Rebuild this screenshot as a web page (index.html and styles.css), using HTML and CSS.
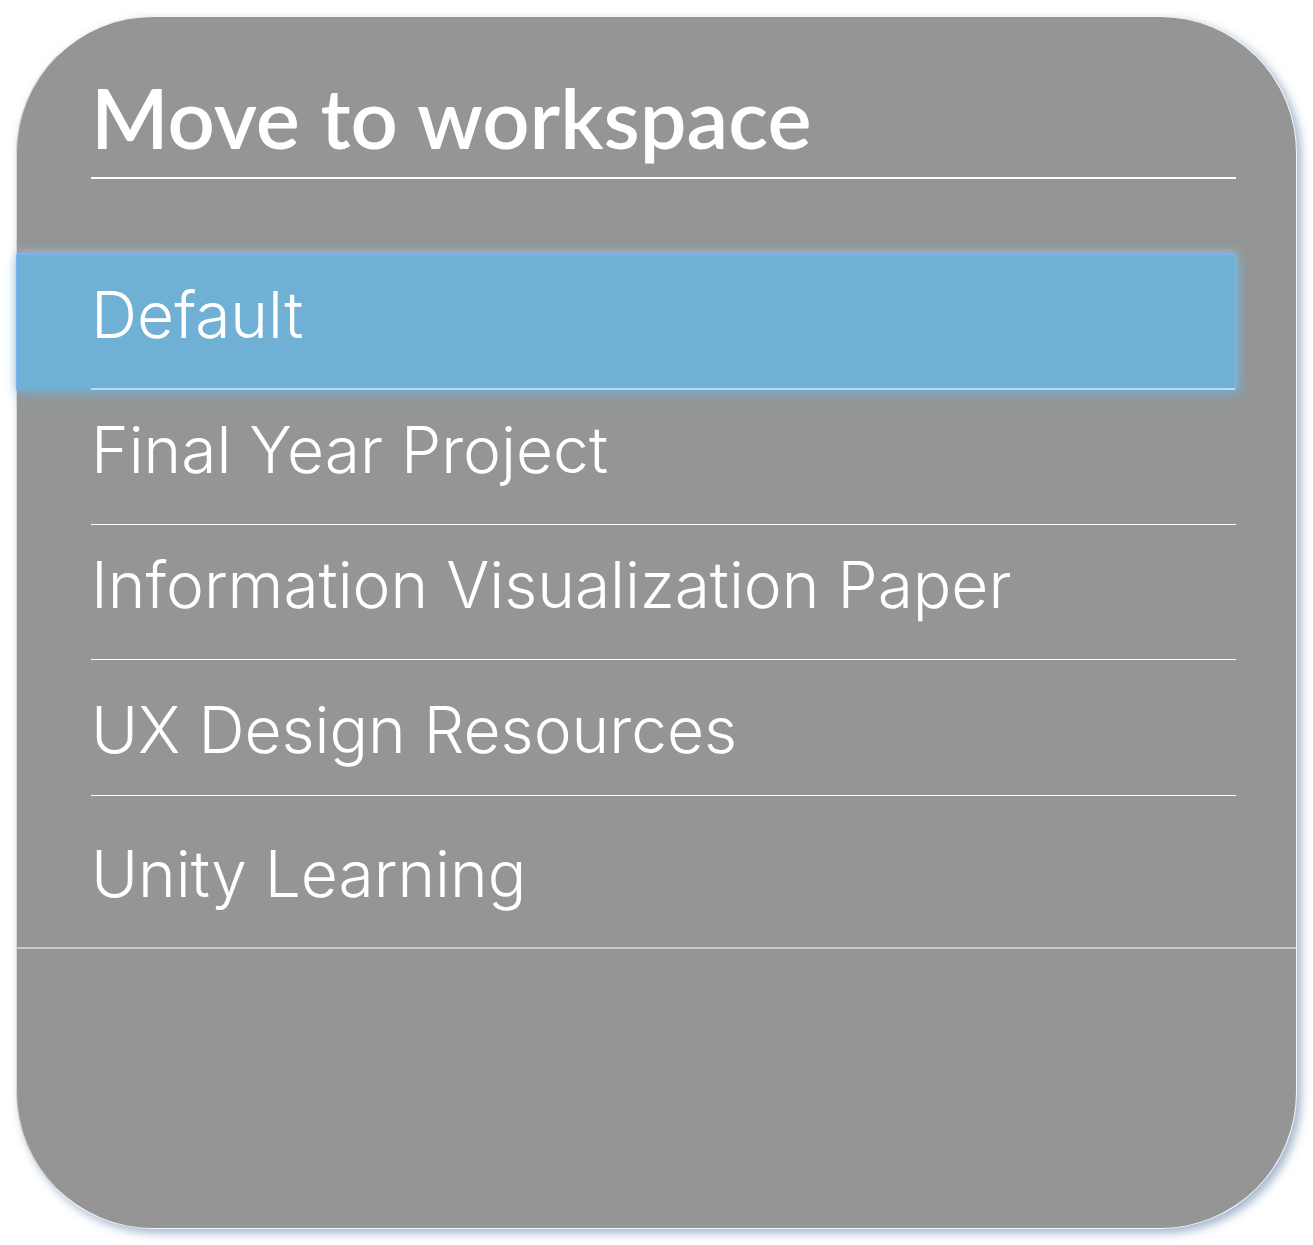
FILE: index.html
```html
<!DOCTYPE html>
<html lang="en">
<head>
<meta charset="utf-8">
<meta name="viewport" content="width=device-width, initial-scale=1">
<title>Move to workspace</title>
<link rel="stylesheet" href="styles.css">
</head>
<body>
<main class="panel">
  <h1 class="title">Move to workspace</h1>
  <nav class="list" aria-label="Workspaces">
    <button type="button" class="item selected"><span class="label">Default</span></button>
    <button type="button" class="item"><span class="label">Final Year Project</span></button>
    <button type="button" class="item"><span class="label">Information Visualization Paper</span></button>
    <button type="button" class="item low"><span class="label">UX Design Resources</span></button>
    <button type="button" class="item last"><span class="label">Unity Learning</span></button>
  </nav>
</main>
</body>
</html>
```
FILE: styles.css
```css
* { box-sizing: border-box; }
body { margin: 0; padding: 16px; background: #fff; }
.panel {
  min-height: calc(100vh - 32px);
  border: 1px solid #f4f5f7;
  border-left-color: #d4d6d8;
  border-radius: 137px;
  background: #959595;
  box-shadow: 4px 4px 10px rgba(70, 105, 155, .5);
  color: #fff;
}
.title {
  margin: 0 60px 0 74px;
  padding-top: 50px;
  height: 162px;
  border-bottom: 2px solid #fff;
  font: 600 83px/100px "Lato", sans-serif;
  white-space: nowrap;
}
.list { display: flex; flex-direction: column; padding-top: 75px; }
.item {
  height: 135px;
  margin: 0;
  padding: 0 60px 0 74px;
  border: 0;
  background: none;
  color: inherit;
  font: 300 64px/80px "Inter", sans-serif;
  text-align: left;
  white-space: nowrap;
}
.label { display: block; height: 100%; padding-top: 20px; border-bottom: 1px solid #fff; }
.selected {
  height: 136px;
  margin: 0 60px 0 -1px;
  padding-right: 0;
  border: 1px solid #79b4f8;
  border-bottom: 0;
  background: #71b0d5;
  box-shadow: 3px 3px 12px #71b0d5, 0 -3px 8px rgba(190, 220, 230, .5);
}
.selected .label { border-bottom: 2px solid #b9dbf0; }
.low { height: 136px; }
.low .label { padding-top: 30px; }
.last { height: 153px; padding: 0; }
.last .label { padding: 38px 74px 0; border-bottom: 2px solid #cacaca; }
```
